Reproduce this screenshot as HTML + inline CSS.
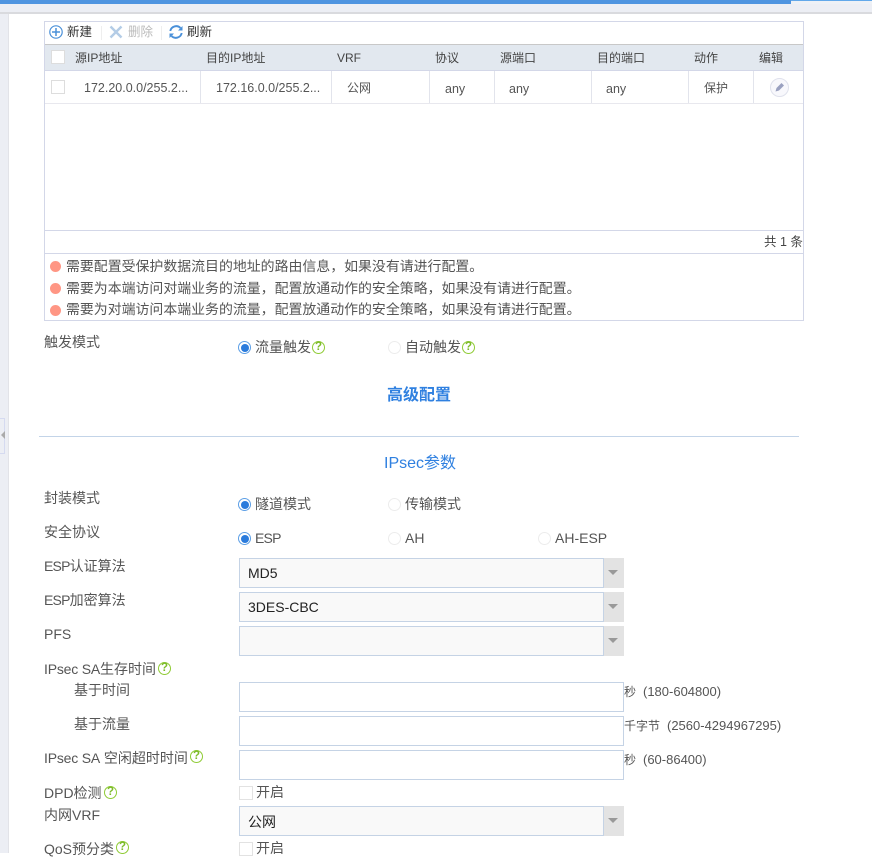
<!DOCTYPE html>
<html lang="zh"><head><meta charset="utf-8"><style>
html,body{margin:0;padding:0;background:#fff}
body{width:872px;height:853px;overflow:hidden;position:relative;font-family:"Liberation Sans","Noto Sans CJK SC",sans-serif;font-size:14px;color:#555}
.a,.t{position:absolute}
.t{white-space:nowrap;line-height:20px}
.h{font-size:12px;color:#444}
.c{font-size:13px;color:#555}
.l{color:#555;font-size:14px}
.n{font-size:13.92px;color:#555}
.rad{position:absolute;width:11px;height:11px;border:1px solid #ececec;border-radius:50%;background:#fff}
.rad.on{border:1px solid #5c9fe6}
.rad.on:after{content:"";position:absolute;left:1.5px;top:1.5px;width:8px;height:8px;border-radius:50%;background:#2a7bdc}
.q{position:absolute;width:11px;height:11px;border:1.5px solid #8fcb35;border-radius:50%;color:#7dbb2a;font-size:11.5px;font-weight:bold;line-height:11px;text-align:center;background:#fff}
.sel{position:absolute;left:239px;width:363px;height:28px;border:1px solid #c5d3e5;background:#f9f9f9}
.arr{position:absolute;left:604px;width:20px;height:30px;background:#e3e3e3}
.arr:after{content:"";position:absolute;left:4px;top:12px;border-left:5px solid transparent;border-right:5px solid transparent;border-top:5px solid #999}
.sv{font-size:14px;color:#222}
.inp{position:absolute;left:239px;width:383px;height:28px;border:1px solid #c5d3e5;background:#fff}
.dot{position:absolute;left:50px;width:11px;height:11px;border-radius:50%;background:#ff9684}
.v{position:absolute;top:71px;width:1px;height:32px;background:#e2e4ec}
.cb{position:absolute;width:12px;height:12px;border:1px solid #ddd;background:#fff}
.u{font-size:12px;color:#555}
.r{font-size:13px;color:#555}
.s{letter-spacing:-.8px}
.i{letter-spacing:-.2px}
</style></head><body>
<div class="a" style="left:0;top:0;width:872px;height:14px;background:#eceef4"></div>
<div class="a" style="left:0;top:0;width:791px;height:4px;background:#4f94e0"></div>
<div class="a" style="left:791px;top:0;width:81px;height:1px;background:#62a8ea"></div>
<div class="a" style="left:791px;top:1px;width:81px;height:3px;background:#eef1f6"></div>
<div class="a" style="left:0;top:12px;width:872px;height:2px;background:#d9dade"></div>
<div class="a" style="left:0;top:14px;width:9px;height:839px;background:#eceef4"></div>
<div class="a" style="left:8px;top:14px;width:1px;height:839px;background:#e2e3e8"></div>
<div class="a" style="left:0;top:418px;width:4px;height:34px;border:1px solid #d5daf0;border-left:0;background:#eceef4"></div>
<div class="a" style="left:1px;top:431px;border-top:4px solid transparent;border-bottom:4px solid transparent;border-right:4px solid #aaa"></div>

<div class="a" style="left:44px;top:21px;width:758px;height:298px;border:1px solid #d3d7e8"></div>
<div class="a" style="left:45px;top:44px;width:758px;background:#e2e8ef;border-top:1px solid #c8c8c8;border-bottom:1px solid #d3d7e8;box-sizing:border-box;height:27px"></div>
<div class="a" style="left:45px;top:103px;width:758px;height:1px;background:#e8e8ee"></div>
<div class="a" style="left:45px;top:230px;width:758px;height:1px;background:#d3d7e8"></div>
<div class="a" style="left:45px;top:253px;width:758px;height:1px;background:#d3d7e8"></div>

<svg class="a" style="left:49px;top:25px" width="14" height="14" viewBox="0 0 14 14"><circle cx="7" cy="7" r="6.200" fill="none" stroke="#4a90d9" stroke-width="1.2"/><path d="M7 3v8M3 7h8" stroke="#4a90d9" stroke-width="1.500"/></svg>
<div class="t" style="left:67px;top:22px;font-size:12.500px;color:#333">新建</div>
<div class="a" style="left:101px;top:26px;width:1px;height:14px;background:#eee"></div>
<svg class="a" style="left:109px;top:25px" width="14" height="14" viewBox="0 0 14 14"><path d="M1.500 1.500l11 11M12.500 1.500l-11 11" stroke="#b4cce6" stroke-width="2.400"/></svg>
<div class="t" style="left:128px;top:22px;font-size:12.500px;color:#bbb">删除</div>
<div class="a" style="left:161px;top:26px;width:1px;height:14px;background:#eee"></div>
<svg class="a" style="left:169px;top:25px" width="14" height="14" viewBox="0 0 14 14"><path d="M1.300 6A6 6 0 0 1 11.500 3M12.700 8A6 6 0 0 1 2.500 11" fill="none" stroke="#4a90d9" stroke-width="1.900"/><path d="M13.500 1V5.500H9zM.5 13V8.500H5z" fill="#4a90d9"/></svg>
<div class="t" style="left:187px;top:22px;font-size:12.500px;color:#333">刷新</div>

<div class="cb" style="left:51px;top:50px"></div>
<div class="t h" style="left:75px;top:48px">源IP地址</div>
<div class="t h" style="left:206px;top:48px">目的IP地址</div>
<div class="t h" style="left:337px;top:48px">VRF</div>
<div class="t h" style="left:435px;top:48px">协议</div>
<div class="t h" style="left:500px;top:48px">源端口</div>
<div class="t h" style="left:597px;top:48px">目的端口</div>
<div class="t h" style="left:694px;top:48px">动作</div>
<div class="t h" style="left:759px;top:48px">编辑</div>

<div class="v" style="left:200px"></div><div class="v" style="left:331px"></div><div class="v" style="left:429px"></div><div class="v" style="left:494px"></div><div class="v" style="left:591px"></div><div class="v" style="left:688px"></div><div class="v" style="left:753px"></div>
<div class="cb" style="left:51px;top:80px"></div>
<div class="t c" style="left:84px;top:78px;font-size:12.500px">172.20.0.0/255.2...</div>
<div class="t c" style="left:216px;top:78px;font-size:12.500px">172.16.0.0/255.2...</div>
<div class="t c" style="left:347px;top:78px;font-size:12px">公网</div>
<div class="t c" style="left:445px;top:79px;font-size:12.500px">any</div>
<div class="t c" style="left:509px;top:79px;font-size:12.500px">any</div>
<div class="t c" style="left:606px;top:79px;font-size:12.500px">any</div>
<div class="t c" style="left:704px;top:78px;font-size:12px">保护</div>
<svg class="a" style="left:770px;top:78px" width="19" height="19" viewBox="0 0 19 19"><circle cx="9.500" cy="9.500" r="9" fill="#f8f8fc" stroke="#dfe1ec"/><path d="M5.500 13.500l1-3.500 5-5 2.500 2.500-5 5z" fill="#9aa1c0"/></svg>
<div class="t" style="left:764px;top:232px;font-size:12.500px;color:#444">共 1 条</div>

<div class="dot" style="top:261px"></div><div class="t n" style="left:66px;top:256px">需要配置受保护数据流目的地址的路由信息，如果没有请进行配置。</div>
<div class="dot" style="top:283px"></div><div class="t n" style="left:66px;top:278px">需要为本端访问对端业务的流量，配置放通动作的安全策略，如果没有请进行配置。</div>
<div class="dot" style="top:305px"></div><div class="t n" style="left:66px;top:299px">需要为对端访问本端业务的流量，配置放通动作的安全策略，如果没有请进行配置。</div>

<div class="t l" style="left:44px;top:332px">触发模式</div>
<div class="rad on" style="left:238px;top:341px"></div><div class="t l" style="left:255px;top:337px">流量触发</div><div class="q" style="left:312px;top:341px">?</div>
<div class="rad" style="left:388px;top:341px"></div><div class="t l" style="left:405px;top:337px">自动触发</div><div class="q" style="left:462px;top:341px">?</div>

<div class="t" style="left:387px;top:386px;font-size:16px;font-weight:bold;color:#2f80e0">高级配置</div>
<div class="a" style="left:39px;top:436px;width:760px;height:1px;background:#c3d4e8"></div>
<div class="t" style="left:384px;top:454px;font-size:16px;color:#2f80e0">IPsec参数</div>

<div class="t l" style="left:44px;top:488px">封装模式</div>
<div class="rad on" style="left:238px;top:498px"></div><div class="t l" style="left:255px;top:494px">隧道模式</div>
<div class="rad" style="left:388px;top:498px"></div><div class="t l" style="left:405px;top:494px">传输模式</div>
<div class="t l" style="left:44px;top:522px">安全协议</div>
<div class="rad on" style="left:238px;top:532px"></div><div class="t l s" style="left:255px;top:528px">ESP</div>
<div class="rad" style="left:388px;top:532px"></div><div class="t l" style="left:405px;top:528px">AH</div>
<div class="rad" style="left:538px;top:532px"></div><div class="t l" style="left:555px;top:528px">AH-ESP</div>

<div class="t l" style="left:44px;top:556px"><span class="s">ESP</span>认证算法</div>
<div class="sel" style="top:558px"></div><div class="arr" style="top:558px"></div><div class="t sv" style="left:248px;top:563px">MD5</div>
<div class="t l" style="left:44px;top:590px"><span class="s">ESP</span>加密算法</div>
<div class="sel" style="top:592px"></div><div class="arr" style="top:592px"></div><div class="t sv" style="left:248px;top:597px">3DES-CBC</div>
<div class="t l" style="left:44px;top:624px">PFS</div>
<div class="sel" style="top:626px"></div><div class="arr" style="top:626px"></div>

<div class="t l" style="left:44px;top:659px"><span class="i">IPsec SA</span>生存时间</div><div class="q" style="left:158px;top:662px">?</div>
<div class="t l" style="left:74px;top:680px">基于时间</div>
<div class="inp" style="top:682px"></div><div class="t u" style="left:624px;top:682px">秒</div><div class="t r" style="left:643px;top:682px">(180-604800)</div>
<div class="t l" style="left:74px;top:714px">基于流量</div>
<div class="inp" style="top:716px"></div><div class="t u" style="left:624px;top:716px">千字节</div><div class="t r" style="left:667px;top:716px">(2560-4294967295)</div>
<div class="t l" style="left:44px;top:748px"><span class="i">IPsec SA</span> 空闲超时时间</div><div class="q" style="left:190px;top:750px">?</div>
<div class="inp" style="top:750px"></div><div class="t u" style="left:624px;top:750px">秒</div><div class="t r" style="left:643px;top:750px">(60-86400)</div>

<div class="t l" style="left:44px;top:783px">DPD检测</div><div class="q" style="left:104px;top:786px">?</div>
<div class="cb" style="left:239px;top:786px;border-color:#e2e2e2"></div><div class="t l" style="left:256px;top:782px">开启</div>
<div class="t l" style="left:44px;top:805px">内网VRF</div>
<div class="sel" style="top:806px"></div><div class="arr" style="top:806px"></div><div class="t sv" style="left:248px;top:812px">公网</div>
<div class="t l" style="left:44px;top:839px">QoS预分类</div><div class="q" style="left:116px;top:841px">?</div>
<div class="cb" style="left:239px;top:842px;border-color:#e2e2e2"></div><div class="t l" style="left:256px;top:838px">开启</div>
</body></html>
